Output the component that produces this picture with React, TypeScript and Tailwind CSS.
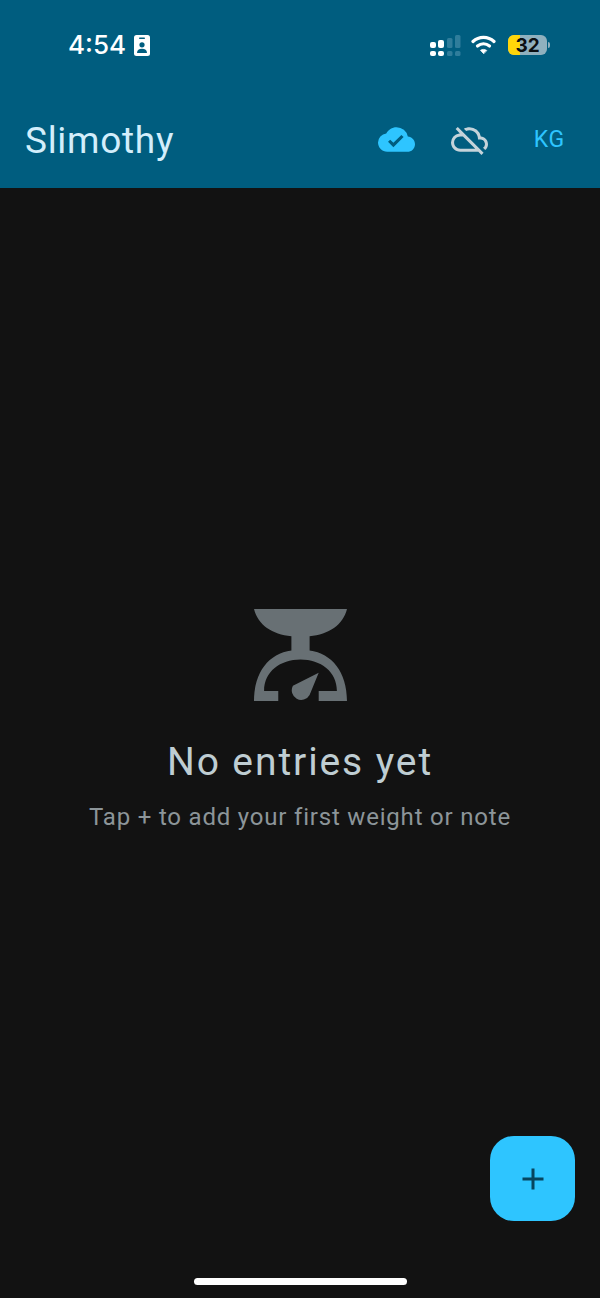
import { MdCloudDone, MdOutlineCloudOff } from "react-icons/md";

function ContactBadge() {
  return (
    <svg width="16" height="21" viewBox="0 0 16 21" className="ml-[8px]">
      <rect width="16" height="21" rx="2.5" fill="#fff" />
      <rect x="5" y="2.5" width="6" height="1.5" rx="0.7" fill="#005d7f" />
      <circle cx="8" cy="9.8" r="2.6" fill="#005d7f" />
      <path d="M3 18c0-2.8 2-4.2 5-4.2s5 1.4 5 4.2z" fill="#005d7f" />
    </svg>
  );
}

function SignalDots() {
  return (
    <svg width="31" height="21" viewBox="0 0 31 21">
      <rect x="0" y="7" width="6" height="6" rx="2" fill="#fff" />
      <rect x="0" y="16" width="6" height="5" rx="2" fill="#fff" />
      <rect x="8" y="5" width="6" height="8" rx="2" fill="#fff" />
      <rect x="8" y="16" width="6" height="5" rx="2" fill="#fff" />
      <rect x="17" y="3" width="5.5" height="10" rx="1.5" fill="#2f7d9b" />
      <rect x="17" y="16" width="5.5" height="5" rx="1.5" fill="#2f7d9b" />
      <rect x="25" y="0" width="5.5" height="13" rx="1.5" fill="#2f7d9b" />
      <rect x="25" y="16" width="5.5" height="5" rx="1.5" fill="#2f7d9b" />
    </svg>
  );
}

function Wifi() {
  return (
    <svg width="25" height="20" viewBox="0 0 25 20" fill="none" stroke="#fff" strokeWidth="3.2" strokeLinecap="round">
      <path d="M2 6.5C8 1 17 1 23 6.5" />
      <path d="M6.5 11C10 8 15 8 18.5 11" />
      <path d="M12.5 18.5l-3-3.2c1.8-1.2 4.2-1.2 6 0z" fill="#fff" strokeWidth="0.8" strokeLinejoin="round" />
    </svg>
  );
}

function Battery() {
  return (
    <div className="flex items-center ml-[12px]">
      <div className="relative w-[39px] h-[20px] rounded-[6px] bg-[#8fb0be] overflow-hidden flex items-center justify-center">
        <div className="absolute left-0 top-0 bottom-0 w-[12px] bg-[#ffd60a]" />
        <span className="relative text-[19px] leading-none font-bold text-[#0b0f12] font-['Inter',sans-serif]">32</span>
      </div>
      <div className="w-[2px] h-[6px] ml-[1px] rounded-r-sm bg-[#8fb0be]" />
    </div>
  );
}

function ScaleIcon() {
  return (
    <svg width="93" height="92" viewBox="0 0 92 91" fill="#687074">
      <path d="M0 0H92C88 16 74 25 55 27V41C77 44 92 62 92 91H64V81H82C82 62 66 50 46 50C26 50 10 62 10 81H24V91H0C0 62 15 44 37 41V27C18 25 4 16 0 0Z" />
      <path d="M64 63L55 85A9.3 9.3 0 1 1 38.5 76Z" />
    </svg>
  );
}

export default function App() {
  return (
    <div className="relative w-[600px] h-[1298px] bg-[#121212] flex flex-col overflow-hidden font-['Roboto',sans-serif]">
      <header className="h-[188px] bg-[#005d7f] flex flex-col shrink-0">
        <div className="h-[90px] pt-[34px] pl-[68px] pr-[50px] flex items-start justify-between">
          <div className="flex items-center h-[22px]">
            <span className="text-[26px] leading-none font-medium text-white font-['Inter',sans-serif]">4:54</span>
            <ContactBadge />
          </div>
          <div className="flex items-center h-[22px]">
            <SignalDots />
            <div className="ml-[10px]"><Wifi /></div>
            <Battery />
          </div>
        </div>
        <div className="flex items-center h-[98px] pl-[25px] pr-[35px]">
          <h1 className="text-[37px] leading-none text-[#d3eefb] mt-[2px] tracking-[0.7px]">Slimothy</h1>
          <MdCloudDone className="ml-auto text-[37px] text-[#2ec5ff]" />
          <MdOutlineCloudOff className="ml-[36px] text-[37px] text-[#c4d3da]" />
          <span className="ml-[46px] mt-[2px] text-[23px] text-[#2ec5ff] tracking-[0.8px]">KG</span>
        </div>
      </header>

      <main className="flex-1 flex flex-col items-center pt-[421px]">
        <ScaleIcon />
        <p className="mt-[38px] text-[39px] leading-[46px] text-[#bfcdd2] tracking-[1.9px]">No entries yet</p>
        <p className="mt-[18px] text-[24px] leading-[28px] text-[#8c9599] tracking-[0.8px]">Tap + to add your first weight or note</p>
      </main>

      <button className="absolute left-[490px] top-[1136px] w-[85px] h-[85px] rounded-[24px] bg-[#2ec5ff] flex items-center justify-center">
        <svg width="24" height="24" viewBox="0 0 24 24" stroke="#06455f" strokeWidth="3" fill="none">
          <path d="M12 1.5V22.5M1.5 12H22.5" />
        </svg>
      </button>
      <div className="absolute left-[194px] top-[1278px] w-[213px] h-[7px] rounded-full bg-white" />
    </div>
  );
}
